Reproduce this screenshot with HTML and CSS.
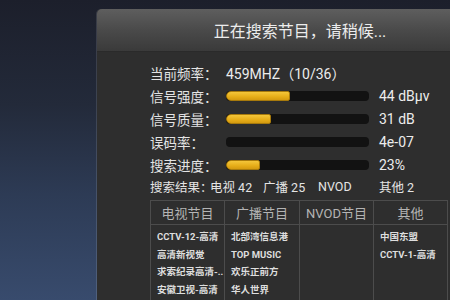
FILE: index.html
```html
<!DOCTYPE html>
<html lang="zh">
<head>
<meta charset="utf-8">
<title>搜索节目</title>
<link rel="stylesheet" href="styles.css">
</head>
<body>
<div class="screen">
  <div class="panel">
    <div class="header">正在搜索节目，请稍候...</div>
    <div class="content">
      <div class="row">
        <span class="label">当前频率：</span>
        <span class="freq">459MHZ（10/36）</span>
      </div>
      <div class="row">
        <span class="label">信号强度：</span>
        <span class="track"><span class="fill" style="width:64px"></span></span>
        <span class="value">44 dBμv</span>
      </div>
      <div class="row">
        <span class="label">信号质量：</span>
        <span class="track"><span class="fill" style="width:45px"></span></span>
        <span class="value">31 dB</span>
      </div>
      <div class="row">
        <span class="label">误码率：</span>
        <span class="track"></span>
        <span class="value">4e-07</span>
      </div>
      <div class="row">
        <span class="label">搜索进度：</span>
        <span class="track"><span class="fill" style="width:34px"></span></span>
        <span class="value">23%</span>
      </div>
      <div class="summary">
        <span class="s-label">搜索结果：</span>
        <span class="s-tv">电视 42</span>
        <span class="s-radio">广播 25</span>
        <span class="s-nvod">NVOD</span>
        <span class="s-other">其他 2</span>
      </div>
      <div class="table">
        <div class="th">电视节目</div>
        <div class="th">广播节目</div>
        <div class="th">NVOD节目</div>
        <div class="th">其他</div>
        <div class="td">
          <div>CCTV-12-高清</div>
          <div>高清新视觉</div>
          <div>求索纪录高清-..</div>
          <div>安徽卫视-高清</div>
        </div>
        <div class="td">
          <div>北部湾信息港</div>
          <div>TOP MUSIC</div>
          <div>欢乐正前方</div>
          <div>华人世界</div>
        </div>
        <div class="td"></div>
        <div class="td">
          <div>中国东盟</div>
          <div>CCTV-1-高清</div>
        </div>
      </div>
    </div>
  </div>
</div>
</body>
</html>
```

FILE: styles.css
```css
html, body {
  margin: 0;
  padding: 0;
}
body {
  width: 450px;
  height: 300px;
  overflow: hidden;
  background: linear-gradient(180deg, #1c1f2b 0%, #232a3a 35%, #2d3b55 65%, #384b6d 100%);
  font-family: Roboto, "Noto Sans CJK SC", sans-serif;
  color: #e2e2e2;
}
.screen {
  padding: 9px 0 0 97px;
}
.panel {
  width: 406px;
  height: 300px;
  background: #2e2e2e;
  border-radius: 5px 5px 0 0;
  box-shadow: -1px 0 0 rgba(255,255,255,0.12);
  overflow: hidden;
}
.header {
  height: 43px;
  display: flex;
  align-items: center;
  justify-content: center;
  font-size: 16px;
  color: #ececec;
  background: linear-gradient(180deg, #5e5e5e 0%, #4a4a4a 50%, #3a3a3a 100%);
  border-bottom: 1px solid #2a2a2a;
  box-sizing: border-box;
}
.content {
  padding: 9px 0 0 53px;
}
.row {
  height: 23px;
  display: flex;
  align-items: center;
  font-size: 13.5px;
  white-space: nowrap;
}
.label {
  width: 76px;
  flex-shrink: 0;
  color: #e4e4e4;
}
.freq {
  font-size: 14px;
  color: #ececec;
}
.track {
  width: 143px;
  height: 10px;
  flex-shrink: 0;
  border-radius: 4px;
  background: #121212;
  margin-right: 10px;
  display: flex;
}
.fill {
  height: 10px;
  box-sizing: border-box;
  border-radius: 5px 2px 2px 5px;
  background: linear-gradient(180deg, #f4c63a 0%, #e6ad18 60%, #d49a10 100%);
  border: 1px solid #a77a0c;
}
.value {
  font-size: 14px;
  color: #ececec;
}
.summary {
  height: 20px;
  display: flex;
  align-items: center;
  font-size: 12.5px;
  color: #e4e4e4;
  white-space: nowrap;
}
.summary span { flex-shrink: 0; }
.s-label { width: 60px; }
.s-tv { width: 53px; }
.s-radio { width: 55px; }
.s-nvod { width: 61px; }
.table {
  margin-top: 4px;
  width: 297px;
  display: grid;
  grid-template-columns: 74px 75px 74px 74px;
  grid-template-rows: 24px 120px;
  border-top: 1px solid #4c4c4c;
  border-left: 1px solid #4c4c4c;
}
.th, .td {
  border-right: 1px solid #4c4c4c;
  border-bottom: 1px solid #4c4c4c;
}
.th {
  display: flex;
  align-items: center;
  justify-content: center;
  font-size: 13px;
  color: #b4b4b4;
}
.td {
  padding: 3px 0 0 6px;
  font-size: 9.5px;
  font-weight: bold;
  line-height: 17.5px;
  color: #dedede;
  white-space: nowrap;
  overflow: hidden;
}
```
